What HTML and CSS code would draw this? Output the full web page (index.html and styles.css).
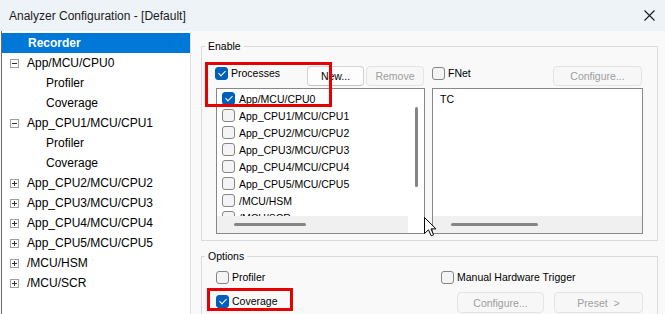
FILE: index.html
```html
<!DOCTYPE html>
<html lang="en">
<head>
  <meta charset="UTF-8">
  <title>Analyzer Configuration - [Default]</title>
  <link rel="stylesheet" href="styles.css">
</head>
<body>

  <div class="window">
    <div class="titlebar">
      <span class="title">Analyzer Configuration - [Default]</span>
      <svg class="close" width="11" height="11" viewBox="0 0 11 11">
        <path d="M0.5 0.5 L10.5 10.5 M10.5 0.5 L0.5 10.5" stroke="#1a1a1a" stroke-width="1.1" fill="none"/>
      </svg>
    </div>

    <div class="client">
      <ul class="tree">
        <li class="sel">Recorder</li>
        <li><span class="exp"></span>App/MCU/CPU0</li>
        <li class="child">Profiler</li>
        <li class="child">Coverage</li>
        <li><span class="exp"></span>App_CPU1/MCU/CPU1</li>
        <li class="child">Profiler</li>
        <li class="child">Coverage</li>
        <li><span class="exp plus"></span>App_CPU2/MCU/CPU2</li>
        <li><span class="exp plus"></span>App_CPU3/MCU/CPU3</li>
        <li><span class="exp plus"></span>App_CPU4/MCU/CPU4</li>
        <li><span class="exp plus"></span>App_CPU5/MCU/CPU5</li>
        <li><span class="exp plus"></span>/MCU/HSM</li>
        <li><span class="exp plus"></span>/MCU/SCR</li>
      </ul>

      <div class="panel">
        <fieldset class="group">
          <legend>Enable</legend>
          <div class="columns">
            <div class="col col-proc">
              <div class="col-head">
                <label class="check head-check"><span class="box on"></span>Processes</label>
                <div class="btns">
                  <button class="btn btn-new" type="button">New...</button>
                  <button class="btn btn-remove" type="button" disabled>Remove</button>
                </div>
              </div>
              <div class="listbox">
                <div class="list-main">
                  <ul class="items">
                    <li><span class="box on"></span>App/MCU/CPU0</li>
                    <li><span class="box"></span>App_CPU1/MCU/CPU1</li>
                    <li><span class="box"></span>App_CPU2/MCU/CPU2</li>
                    <li><span class="box"></span>App_CPU3/MCU/CPU3</li>
                    <li><span class="box"></span>App_CPU4/MCU/CPU4</li>
                    <li><span class="box"></span>App_CPU5/MCU/CPU5</li>
                    <li><span class="box"></span>/MCU/HSM</li>
                    <li><span class="box"></span>/MCU/SCR</li>
                  </ul>
                  <div class="vscroll"><div class="vthumb"></div></div>
                </div>
                <div class="hscroll hscroll-short"><div class="hthumb"></div></div>
              </div>
            </div>

            <div class="col col-fnet">
              <div class="col-head">
                <label class="check head-check"><span class="box"></span>FNet</label>
                <div class="btns">
                  <button class="btn btn-conf" type="button" disabled>Configure...</button>
                </div>
              </div>
              <div class="listbox">
                <div class="list-main">
                  <ul class="items items-plain">
                    <li>TC</li>
                  </ul>
                </div>
                <div class="hscroll"><div class="hthumb hthumb-wide"></div></div>
              </div>
            </div>
          </div>
        </fieldset>

        <fieldset class="group options">
          <legend>Options</legend>
          <div class="opts">
            <div class="opt-left">
              <label class="check"><span class="box"></span>Profiler</label>
              <label class="check"><span class="box on"></span>Coverage</label>
            </div>
            <div class="opt-right">
              <label class="check"><span class="box"></span>Manual Hardware Trigger</label>
              <div class="opt-btns">
                <button class="btn btn-tall btn-conf2" type="button" disabled>Configure...</button>
                <button class="btn btn-tall btn-conf" type="button" disabled>Preset &nbsp;&gt;</button>
              </div>
            </div>
          </div>
        </fieldset>
      </div>
    </div>

    <div class="mark mark-proc"></div>
    <div class="mark mark-cov"></div>

    <svg class="cursor" width="13" height="20" viewBox="0 0 13 20">
      <path d="M0.5 0.5 V16.5 L4.5 12.8 L7.2 18.8 L9.6 17.8 L7 11.9 H12 Z" fill="#fff" stroke="#000" stroke-width="1"/>
    </svg>
  </div>

</body>
</html>
```

FILE: styles.css
```css
* {
  box-sizing: border-box;
}

body {
  margin: 0;
  font-family: "Liberation Sans", Arial, sans-serif;
  background: #f9f9f9;
  color: #000;
  overflow: hidden;
}

.window {
  position: relative;
  width: 665px;
  height: 314px;
  overflow: hidden;
}

.titlebar {
  height: 31px;
  background: #eef3f8;
  display: flex;
  align-items: center;
  justify-content: space-between;
  padding: 0 10px 0 9px;
  font-size: 12px;
  color: #1b1b1b;
}

.client {
  display: flex;
  height: 283px;
}

/* left tree */
.tree {
  width: 190px;
  margin: 0 0 0 1px;
  padding: 2px 0 0;
  list-style: none;
  background: #fff;
  border-left: 1px solid #6b6b6b;
  border-right: 1px solid #e2e2e2;
  font-size: 12px;
}

.tree li {
  height: 20px;
  line-height: 20px;
  display: flex;
  align-items: center;
  padding-left: 8px;
  white-space: nowrap;
}

.tree .sel {
  background: #0078d7;
  color: #fff;
  font-weight: bold;
  padding-left: 26px;
}

.tree .child {
  padding-left: 44px;
}

.exp {
  width: 9px;
  height: 9px;
  border: 1px solid #a0a0a0;
  background: #fff;
  position: relative;
  margin-right: 8px;
  flex: none;
}

.exp::before,
.exp.plus::after {
  content: "";
  position: absolute;
  background: #333;
}

.exp::before {
  left: 1px;
  top: 3px;
  width: 5px;
  height: 1px;
}

.exp.plus::after {
  left: 3px;
  top: 1px;
  width: 1px;
  height: 5px;
}

/* right side */
.panel {
  flex: 1;
  padding-left: 10px;
  font-size: 10.5px;
}

.group {
  margin: 9px 0 0;
  width: 457px;
  border: 1px solid #dadada;
  padding: 13px 14px 6px;
  min-width: 0;
}

.group legend {
  font-size: 10.5px;
  line-height: 13px;
  padding: 0 3px;
  margin-left: -11px;
}

.columns {
  display: flex;
  gap: 7px;
}

.col-proc {
  width: 209px;
}

.col-fnet {
  width: 211px;
}

.col-head {
  display: flex;
  align-items: flex-start;
  height: 20px;
}

.check {
  display: flex;
  align-items: center;
  gap: 3px;
  height: 13px;
  line-height: 13px;
  white-space: nowrap;
}

.head-check {
  margin-top: 1px;
}

.col-proc .head-check {
  margin-left: -1px;
}

.box {
  width: 13px;
  height: 13px;
  border: 1px solid #858585;
  border-radius: 3px;
  background: #f4f4f4;
  flex: none;
  position: relative;
}

.box.on {
  background: #005fb8;
  border-color: #005fb8;
}

.box.on::after {
  content: "";
  position: absolute;
  left: 4px;
  top: 1px;
  width: 3px;
  height: 6px;
  border: solid #fff;
  border-width: 0 1px 1px 0;
  transform: rotate(45deg);
}

.btns {
  margin-left: auto;
  margin-right: 1px;
  display: flex;
  gap: 2px;
}

.btn {
  height: 20px;
  padding: 0;
  font: inherit;
  font-size: 10.5px;
  color: #000;
  background: #fdfdfd;
  border: 1px solid #d3d3d3;
  border-bottom-color: #c4c4c4;
  border-radius: 4px;
}

.btn:disabled {
  color: #9d9d9d;
  background: #f7f7f7;
  border-color: #e4e4e4;
}

.btn-new { width: 57px; }
.btn-remove { width: 58px; }
.btn-conf { width: 89px; }
.btn-conf2 { width: 87px; }
.btn-tall { height: 21px; }

.listbox {
  margin-top: 2px;
  height: 146px;
  border: 1px solid #878787;
  background: #fff;
  display: flex;
  flex-direction: column;
}

.list-main {
  flex: 1;
  display: flex;
  min-height: 0;
}

.items {
  flex: 1;
  margin: 0;
  padding: 1px 0 0 5px;
  list-style: none;
  overflow: hidden;
}

.items li {
  height: 17px;
  display: flex;
  align-items: center;
  gap: 4px;
  white-space: nowrap;
}

.items-plain {
  padding-left: 7px;
}

.vscroll {
  width: 16px;
  padding-top: 18px;
  display: flex;
  justify-content: center;
}

.vthumb {
  width: 3px;
  height: 80px;
  background: #858585;
  border-radius: 2px;
}

.hscroll {
  height: 17px;
  flex: none;
  background: #f0f0f0;
  padding: 7px 0 0 18px;
}

.hscroll-short {
  margin-right: 16px;
  padding-left: 17px;
}

.hthumb {
  width: 72px;
  height: 3px;
  background: #858585;
  border-radius: 2px;
}

.hthumb-wide {
  width: 87px;
}

/* options */
.options {
  padding-top: 8px;
}

.opts {
  display: flex;
}

.opt-left {
  width: 225px;
  display: flex;
  flex-direction: column;
  gap: 11px;
}

.opt-right {
  display: flex;
  flex-direction: column;
  gap: 8px;
}

.opt-btns {
  display: flex;
  gap: 10px;
  padding-left: 16px;
}

/* red annotation boxes and mouse pointer lie over the dialog */
.mark {
  position: absolute;
  border: 3px solid #e60000;
}

.mark-proc {
  left: 205px;
  top: 62px;
  width: 127px;
  height: 45px;
}

.mark-cov {
  left: 207px;
  top: 288px;
  width: 86px;
  height: 23px;
}

.cursor {
  position: absolute;
  left: 424px;
  top: 217px;
}
```
